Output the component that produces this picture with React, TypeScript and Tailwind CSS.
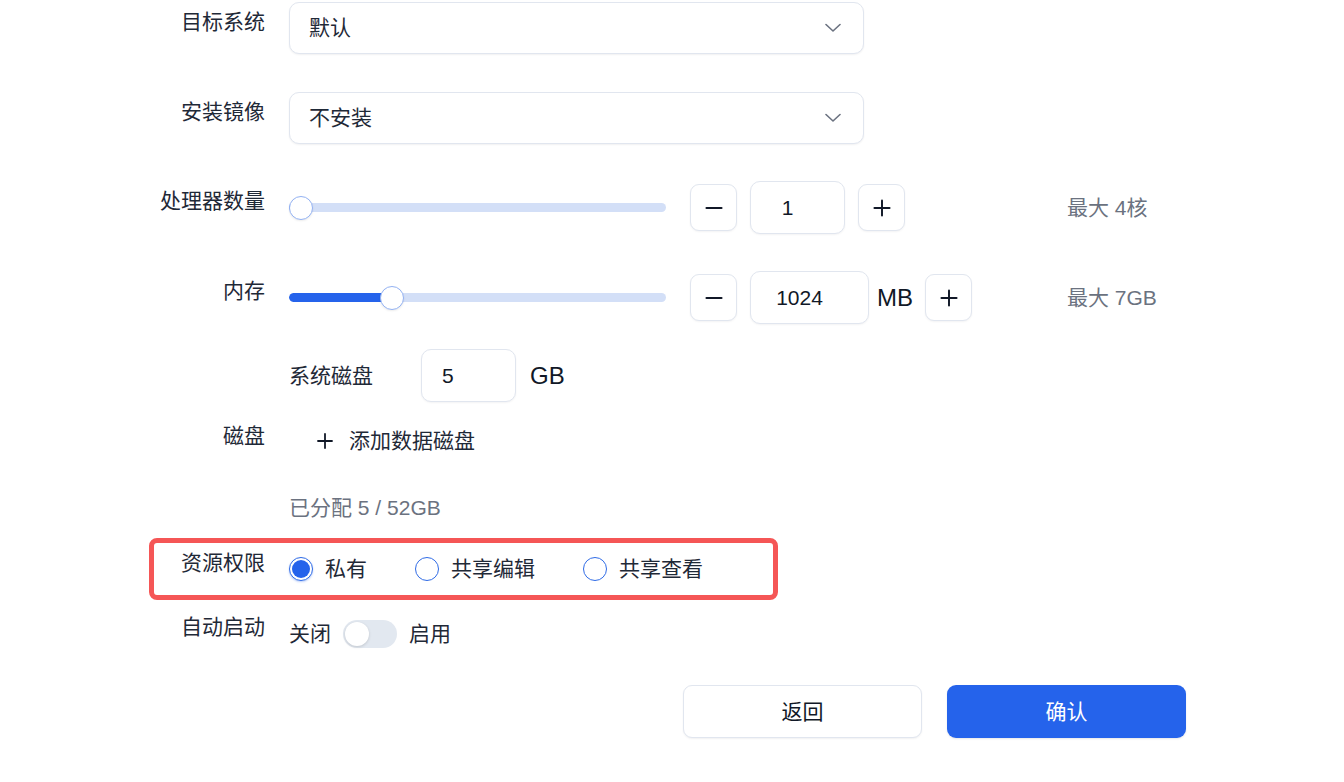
import { useState } from "react"
import { Minus, Plus } from "lucide-react"
import clsx from "clsx"

const font = { fontFamily: '"Liberation Sans", "Noto Sans CJK SC", sans-serif' }

function Row({
  label,
  children,
  className,
  center = false,
}: {
  label?: string
  children: React.ReactNode
  className?: string
  center?: boolean
}) {
  return (
    <div className={clsx("flex gap-6", center ? "items-center" : "items-start", className)}>
      <div className="w-[111px] shrink-0 whitespace-nowrap text-right text-[21px] leading-[40px] text-[#1f2937]">{label}</div>
      <div className="min-w-0">{children}</div>
    </div>
  )
}

function Select({ value }: { value: string }) {
  return (
    <div className="flex h-[52px] w-[575px] items-center justify-between rounded-[10px] border border-[#e1e6ef] bg-white pl-[19px] pr-[22px] shadow-[0_1px_2px_rgba(15,23,42,0.06)]">
      <span className="text-[21px] text-[#1f2937]">{value}</span>
      <svg width="16" height="10" viewBox="0 0 16 10" fill="none">
        <polyline points="1,1.5 8,8 15,1.5" stroke="#6b7280" strokeWidth="1.6" strokeLinecap="round" strokeLinejoin="round" />
      </svg>
    </div>
  )
}

function Slider({ percent }: { percent: number }) {
  // thumb centre travels between 12px and (width - 12px)
  const left = `calc(${percent / 100} * (100% - 24px))`
  return (
    <div className="relative flex h-6 w-[377px] shrink-0 items-center">
      <div className="relative h-[9px] w-full overflow-hidden rounded-full bg-[#d3dff7]">
        <div className="h-full rounded-full bg-[#2563eb]" style={{ width: `calc(${percent / 100} * (100% - 24px) + 12px)` }} />
      </div>
      <div
        className="absolute top-0 h-6 w-6 rounded-full border-[1.5px] border-[#93b2f3] bg-white shadow-[0_1px_2px_rgba(0,0,0,0.08)]"
        style={{ left }}
      />
    </div>
  )
}

function StepButton({ kind }: { kind: "minus" | "plus" }) {
  return (
    <button className="flex h-[47px] w-[47px] items-center justify-center rounded-[9px] border border-[#e1e6ef] bg-white shadow-[0_1px_2px_rgba(15,23,42,0.05)]">
      {kind === "minus" ? (
        <Minus className="h-[26px] w-[26px] text-[#111827]" strokeWidth={1.8} />
      ) : (
        <Plus className="h-[26px] w-[26px] text-[#111827]" strokeWidth={1.8} />
      )}
    </button>
  )
}

function NumberBox({ value, width }: { value: string; width: string }) {
  return (
    <div
      className={clsx(
        "flex h-[53px] items-center justify-center rounded-[10px] border border-[#e1e6ef] bg-white pr-5 text-[21px] text-[#111827] shadow-[0_1px_2px_rgba(15,23,42,0.05)]",
        width
      )}
    >
      {value}
    </div>
  )
}

function Radio({ label, checked, onClick }: { label: string; checked: boolean; onClick: () => void }) {
  return (
    <button className="flex items-center gap-3" onClick={onClick}>
      <span
        className={clsx(
          "flex h-6 w-6 items-center justify-center rounded-full border-[1.5px] border-[#2f6be6] bg-white",
          checked && "shadow-[0_1px_2px_rgba(37,99,235,0.3)]"
        )}
      >
        {checked && <span className="h-[18px] w-[18px] rounded-full bg-[#2563eb]" />}
      </span>
      <span className="text-[21px] text-[#1f2937]">{label}</span>
    </button>
  )
}

export default function App() {
  const [access, setAccess] = useState("private")
  const [autoStart, setAutoStart] = useState(false)

  return (
    <div className="min-h-screen bg-white pl-[154px] pt-[2px]" style={font}>
      <Row label="目标系统">
        <Select value="默认" />
      </Row>

      <Row label="安装镜像" className="mt-[38px]">
        <Select value="不安装" />
      </Row>

      <Row label="处理器数量" className="mt-[37px]">
        <div className="flex h-[53px] items-center">
          <Slider percent={0} />
          <div className="ml-6 flex w-[377px] shrink-0 items-center">
            <StepButton kind="minus" />
            <div className="ml-[13px]">
              <NumberBox value="1" width="w-[95px]" />
            </div>
            <div className="ml-[13px]">
              <StepButton kind="plus" />
            </div>
          </div>
          <span className="whitespace-nowrap text-[21px] text-[#6b7280]">最大 4核</span>
        </div>
      </Row>

      <Row label="内存" className="mt-[37px]">
        <div className="flex h-[53px] items-center">
          <Slider percent={25.8} />
          <div className="ml-6 flex w-[377px] shrink-0 items-center">
            <StepButton kind="minus" />
            <div className="ml-[13px]">
              <NumberBox value="1024" width="w-[119px]" />
            </div>
            <span className="ml-2 text-[24px] text-[#111827]">MB</span>
            <div className="ml-3">
              <StepButton kind="plus" />
            </div>
          </div>
          <span className="whitespace-nowrap text-[21px] text-[#6b7280]">最大 7GB</span>
        </div>
      </Row>

      <Row label="磁盘" center className="mt-[25px]">
        <div className="flex h-[53px] items-center">
          <span className="w-[132px] text-[21px] text-[#1f2937]">系统磁盘</span>
          <div className="flex h-[53px] w-[95px] items-center rounded-[10px] border border-[#e1e6ef] bg-white pl-5 text-[21px] text-[#111827] shadow-[0_1px_2px_rgba(15,23,42,0.05)]">
            5
          </div>
          <span className="ml-[14px] text-[24px] text-[#111827]">GB</span>
        </div>
        <button className="mt-[19px] flex h-10 items-center gap-3 pl-[24px] text-[21px] text-[#1f2937]">
          <Plus className="h-[24px] w-[24px] text-[#111827]" strokeWidth={1.8} />
          添加数据磁盘
        </button>
        <div className="mt-[33px] text-[21px] leading-7 text-[#6b7280]">已分配 5 / 52GB</div>
      </Row>

      <Row
        label="资源权限"
        className="mt-[21px] h-[52px] w-[619px] rounded-[3px] outline-[length:5px] outline-solid outline-[#f55656]"
      >
        <div className="flex h-[52px] items-center gap-12">
          <Radio label="私有" checked={access === "private"} onClick={() => setAccess("private")} />
          <Radio label="共享编辑" checked={access === "edit"} onClick={() => setAccess("edit")} />
          <Radio label="共享查看" checked={access === "view"} onClick={() => setAccess("view")} />
        </div>
      </Row>

      <Row label="自动启动" className="mt-3">
        <div className="flex h-[53px] items-center gap-3 text-[21px] text-[#1f2937]">
          <span>关闭</span>
          <button
            onClick={() => setAutoStart(!autoStart)}
            className={clsx(
              "flex h-[28px] w-[54px] items-center rounded-full px-[2px]",
              autoStart ? "justify-end bg-[#2563eb]" : "bg-[#e2e8f0]"
            )}
          >
            <span className="h-6 w-6 rounded-full bg-white shadow-[0_1px_3px_rgba(0,0,0,0.15)]" />
          </button>
          <span>启用</span>
        </div>
      </Row>

      <Row className="mt-[25px]">
        <div className="flex w-[897px] justify-end gap-[25px]">
          <button className="h-[53px] w-[239px] rounded-[9px] border border-[#e1e6ef] bg-white text-[21px] text-[#111827] shadow-[0_1px_2px_rgba(15,23,42,0.06)]">
            返回
          </button>
          <button className="h-[53px] w-[239px] rounded-[9px] bg-[#2563eb] text-[21px] text-white shadow-[0_1px_2px_rgba(15,23,42,0.1)]">
            确认
          </button>
        </div>
      </Row>
    </div>
  )
}
